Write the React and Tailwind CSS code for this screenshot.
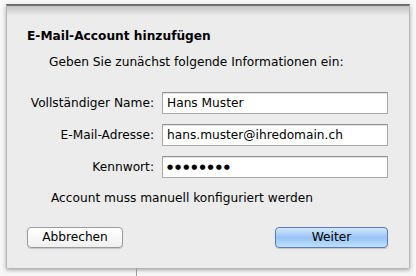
import React from 'react';

const font = { fontFamily: '"DejaVu Sans", "Liberation Sans", sans-serif' };

function Field({ label, value, dots }) {
  return (
    <div className="flex items-center">
      <span className="w-[127px] whitespace-nowrap text-right">{label}</span>
      <div className="ml-[8px] flex h-[22px] w-[226px] items-center border border-[#a9a9a9] border-t-[#8e8e8e] bg-white px-[4px] shadow-[inset_0_1px_1px_rgba(0,0,0,0.12)]">
        {dots ? <span className="text-[7px] tracking-[2px]">{'\u25CF'.repeat(8)}</span> : value}
      </div>
    </div>
  );
}

export default function App() {
  return (
    <div className="flex h-[276px] w-[416px] flex-col bg-[#f7f7f7] text-[12.2px] text-black" style={font}>
      <div className="mx-[6px] mt-[4px] h-[264px] w-[404px] border-l border-r border-[#b8b8b8] border-t-2 border-t-[#6e6e6e] bg-[#ececec] shadow-[0_2px_4px_rgba(0,0,0,0.35)]">
        <div className="h-[10px] bg-gradient-to-b from-[#c4c4c4] to-[#ececec]" />
        <div className="pl-[20px] pr-[21px]">
          <div className="mt-[12px] font-bold leading-[16px]">E-Mail-Account hinzufügen</div>
          <div className="mt-[10px] pl-[22px] leading-[16px]">Geben Sie zunächst folgende Informationen ein:</div>
          <div className="mt-[22px] flex flex-col gap-[10px]">
            <Field label="Vollständiger Name:" value="Hans Muster" />
            <Field label="E-Mail-Adresse:" value="hans.muster@ihredomain.ch" />
            <Field label="Kennwort:" dots />
          </div>
          <div className="mt-[12px] pl-[24px] leading-[16px]">Account muss manuell konfiguriert werden</div>
          <div className="mt-[21px] flex justify-between">
            <button className="h-[21px] w-[96px] rounded-[4px] border border-[#9a9a9a] bg-gradient-to-b from-white to-[#f0f0f0] leading-none shadow-[0_1px_1px_rgba(0,0,0,0.15)]">Abbrechen</button>
            <button className="h-[21px] w-[113px] rounded-[4px] border border-[#5a7bb3] bg-gradient-to-b from-[#d6e8fc] via-[#97c4f4] to-[#bfe0fd] leading-none shadow-[0_1px_1px_rgba(0,0,0,0.15)]">Weiter</button>
          </div>
        </div>
      </div>
      <div className="flex flex-1">
        <div className="ml-[136px] w-px bg-[#9a9a9a]" />
      </div>
    </div>
  );
}
